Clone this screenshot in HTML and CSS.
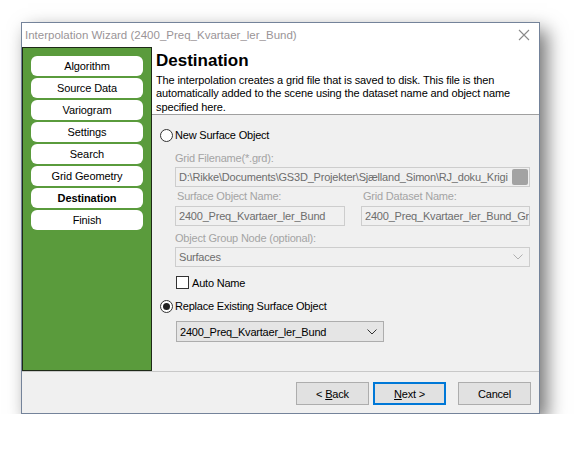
FILE: index.html
```html
<!DOCTYPE html>
<html>
<head>
<meta charset="utf-8">
<link rel="stylesheet" href="styles.css">
</head>
<body>
<div class="window">
  <div class="titlebar">
    <span class="title">Interpolation Wizard (2400_Preq_Kvartaer_ler_Bund)</span>
    <svg class="close" width="12" height="12" viewBox="0 0 12 12"><path d="M1 1L11 11M11 1L1 11" stroke="#8a8a8a" stroke-width="1.1" fill="none"/></svg>
  </div>
  <div class="main">
    <div class="sidebar">
      <div class="nav">Algorithm</div>
      <div class="nav">Source Data</div>
      <div class="nav">Variogram</div>
      <div class="nav">Settings</div>
      <div class="nav">Search</div>
      <div class="nav">Grid Geometry</div>
      <div class="nav active">Destination</div>
      <div class="nav">Finish</div>
    </div>
    <div class="content">
      <div class="header">
        <div class="h1">Destination</div>
        <div class="desc">The interpolation creates a grid file that is saved to disk. This file is then automatically added to the scene using the dataset name and object name specified here.</div>
      </div>
      <div class="form">
        <div class="radio-row r1"><span class="radio"></span><span>New Surface Object</span></div>
        <div class="lbl l1">Grid Filename(*.grd):</div>
        <div class="field wide"><span class="ftext">D:\Rikke\Documents\GS3D_Projekter\Sjælland_Simon\RJ_doku_Krigi</span><span class="browse"></span></div>
        <div class="two">
          <div class="col">
            <div class="lbl">Surface Object Name:</div>
            <div class="field"><span class="ftext">2400_Preq_Kvartaer_ler_Bund</span></div>
          </div>
          <div class="col">
            <div class="lbl">Grid Dataset Name:</div>
            <div class="field"><span class="ftext">2400_Preq_Kvartaer_ler_Bund_Gr</span></div>
          </div>
        </div>
        <div class="lbl l3">Object Group Node (optional):</div>
        <div class="field wide sel"><span class="ftext">Surfaces</span>
          <svg class="chev" width="10" height="6" viewBox="0 0 10 6"><path d="M0.5 0.5L5 5L9.5 0.5" stroke="#b0b0b0" fill="none"/></svg>
        </div>
        <div class="check-row"><span class="check"></span><span>Auto Name</span></div>
        <div class="radio-row r2"><span class="radio on"></span><span>Replace Existing Surface Object</span></div>
        <div class="combo"><span>2400_Preq_Kvartaer_ler_Bund</span>
          <svg class="chev" width="10" height="6" viewBox="0 0 10 6"><path d="M0.5 0.5L5 5L9.5 0.5" stroke="#333" fill="none"/></svg>
        </div>
      </div>
    </div>
  </div>
  <div class="footer">
    <div class="btn"><span>&lt; <u>B</u>ack</span></div>
    <div class="btn default"><span><u>N</u>ext &gt;</span></div>
    <div class="btn cancel"><span>Cancel</span></div>
  </div>
</div>
</body>
</html>
```
FILE: styles.css
```css
html, body {
  margin: 0;
  padding: 0;
  background: #ffffff;
}
body {
  padding: 22px 0 0 21px;
  font-family: "Liberation Sans", Arial, sans-serif;
  font-size: 11px;
  letter-spacing: -0.2px;
  color: #000;
}
.window {
  box-sizing: border-box;
  width: 519px;
  height: 392px;
  border: 1px solid #74839a;
  background: #f0f0f0;
  box-shadow: 7px 8px 18px rgba(0, 0, 0, 0.55);
  display: flex;
  flex-direction: column;
}
.titlebar {
  height: 24px;
  background: #fff;
  display: flex;
  align-items: center;
  justify-content: space-between;
  padding: 0 9px 0 3px;
  flex: none;
}
.title {
  color: #9a9497;
  font-size: 11.5px;
  letter-spacing: 0;
}
.close { display: block; }
.main {
  height: 324px;
  display: flex;
  flex: none;
}
.sidebar {
  box-sizing: border-box;
  width: 130px;
  flex: none;
  background: #5a9b3c;
  border: 1px solid #1e2a18;
  padding: 8px 8px 0 8px;
  display: flex;
  flex-direction: column;
  gap: 2px;
}
.nav {
  height: 20px;
  background: #fff;
  border-radius: 6px;
  display: flex;
  align-items: center;
  justify-content: center;
  font-size: 11px;
  letter-spacing: -0.1px;
}
.nav.active { font-weight: bold; }
.content {
  flex: 1;
  min-width: 0;
  display: flex;
  flex-direction: column;
}
.header {
  height: 68px;
  background: #fff;
  border-bottom: 1px solid #a0a0a0;
  padding: 2px 6px 0 4px;
  box-sizing: border-box;
}
.h1 {
  font-size: 17px;
  font-weight: bold;
  line-height: 24px;
  letter-spacing: 0;
}
.desc {
  font-size: 11px;
  letter-spacing: -0.12px;
  line-height: 13.3px;
  margin-top: 1px;
}
.form {
  padding: 0 9px 0 8px;
  display: flex;
  flex-direction: column;
}
.radio-row {
  display: flex;
  align-items: center;
  height: 16px;
  gap: 2px;
}
.r1 { margin-top: 12px; }
.radio {
  box-sizing: border-box;
  width: 13px;
  height: 13px;
  border: 1px solid #333;
  border-radius: 50%;
  background: #fff;
  position: relative;
}
.radio.on::after {
  content: "";
  position: absolute;
  left: 2px;
  top: 2px;
  width: 7px;
  height: 7px;
  border-radius: 50%;
  background: #222;
}
.lbl {
  color: #a4a4a4;
  height: 15px;
  line-height: 15px;
  margin-left: 15px;
}
.l1 { margin-top: 8px; margin-bottom: 1px; }
.field {
  box-sizing: border-box;
  height: 20px;
  min-width: 0;
  border: 1px solid #cdcdcd;
  background: #f0f0f0;
  display: flex;
  align-items: center;
  padding-left: 3px;
  color: #6d6d6d;
  overflow: hidden;
  white-space: nowrap;
}
.wide { margin-left: 15px; }
.ftext { flex: 1; min-width: 0; overflow: hidden; }
.browse {
  flex: none;
  width: 16px;
  height: 16px;
  background: #a3a3a3;
  border-radius: 2px;
  margin-right: 1px;
}
.two {
  display: flex;
  margin-left: 15px;
  gap: 16px;
  margin-top: 2px;
}
.col { display: flex; flex-direction: column; gap: 2px; min-width: 0; }
.col:first-child { width: 170px; flex: none; }
.col:last-child { flex: 1; }
.col .lbl { margin-left: 2px; }
.l3 { margin-top: 5px; margin-bottom: 1px; }
.sel { padding-right: 6px; }
.chev { flex: none; display: block; }
.check-row {
  display: flex;
  align-items: center;
  gap: 3px;
  margin-left: 16px;
  margin-top: 8px;
  height: 15px;
}
.check {
  box-sizing: border-box;
  width: 13px;
  height: 13px;
  border: 1px solid #333;
  background: #fff;
}
.r2 { margin-top: 8px; }
.combo {
  box-sizing: border-box;
  margin-left: 16px;
  margin-top: 7px;
  width: 208px;
  height: 21px;
  border: 1px solid #adadad;
  background: #e5e5e5;
  display: flex;
  align-items: center;
  justify-content: space-between;
  padding: 0 6px 0 3px;
}
.footer {
  flex: 1;
  border-top: 1px solid #c8c8c8;
  display: flex;
  align-items: flex-start;
  padding: 10px 8px 0 0;
  justify-content: flex-end;
}
.btn {
  box-sizing: border-box;
  width: 73px;
  height: 23px;
  border: 1px solid #adadad;
  background: #e1e1e1;
  display: flex;
  align-items: center;
  justify-content: center;
}
.btn.default {
  border: 2px solid #0078d7;
  margin-left: 4px;
}
.btn.cancel { margin-left: 12px; }
```
